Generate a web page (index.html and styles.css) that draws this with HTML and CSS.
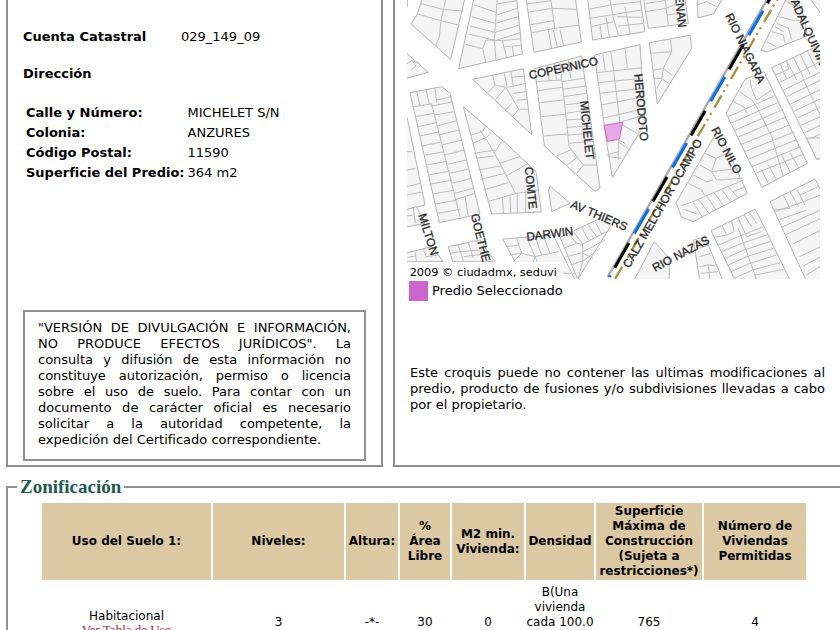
FILE: index.html
```html
<!DOCTYPE html>
<html lang="es">
<head>
<meta charset="utf-8">
<title>Zonificación</title>
<link rel="stylesheet" href="styles.css">
</head>
<body>
<div class="panels">
  <section class="panel info">
    <div class="account"><b>Cuenta Catastral</b><span>029_149_09</span></div>
    <h2 class="heading">Dirección</h2>
    <table class="address">
      <tr><th scope="row">Calle y Número:</th><td>MICHELET S/N</td></tr>
      <tr><th scope="row">Colonia:</th><td>ANZURES</td></tr>
      <tr><th scope="row">Código Postal:</th><td>11590</td></tr>
      <tr><th scope="row">Superficie del Predio:</th><td>364 m2</td></tr>
    </table>
    <p class="notice">"VERSIÓN DE DIVULGACIÓN E INFORMACIÓN, NO PRODUCE EFECTOS JURÍDICOS". La consulta&nbsp;y difusión de esta información no constituye autorización, permiso o licencia sobre el uso de suelo. Para contar con un documento de carácter oficial es necesario solicitar a la autoridad competente, la expedición&nbsp;del Certificado correspondiente.</p>
  </section>
  <section class="panel sketch">
    <svg class="map" viewBox="0 0 1239 837" role="img" aria-label="Croquis">
      <!-- north-west blocks -->
      <g transform="translate(-21 0)">
        <path class="block" d="M15 -6H22V20L15 28ZM67 -6L52 42L33 72L152 178L195 -6ZM222 -6L176 206L367 162L350 -6ZM378 -6L402 157L544 126L526 -6ZM563 -6L578 120L735 95L720 -6ZM15 155L85 217L15 236ZM30 278L125 260L150 280L240 642L118 668ZM218 238L370 206L395 404ZM190 320L320 432L408 515L424 636L275 642ZM404 206L545 168L600 565L585 574L433 438ZM583 165L720 134L735 370L705 420L637 532L622 440ZM15 350L22 355L75 615L15 630Z"/>
        <path class="lot" d="M60 10L127 28L188 33M52 42L123 62L178 76M138 -6L123 62L118 110L107 138M292 -6L283 120M222 14L290 38M215 50L285 70M210 78L284 97M205 102L283 121M197 133L248 146L258 120L310 122L362 116M248 146L257 187M283 121L288 180M307 122L320 172M314 140L365 136M337 140L341 168M290 12L350 2M289 45L352 25M286 70L355 50M285 97L360 75M284 122L362 98M452 -6L465 92M380 12L453 2M383 37L455 25L532 28M388 75L460 62M395 98L465 85L538 75M445 92L455 145M460 90L472 140M480 90L490 135M566 28L630 15L720 5M570 55L725 30M573 80L640 65M650 50L728 52M655 78L732 70M630 0L640 55L655 105M600 75L605 115M618 52L628 110M675 20L690 100M20 192L35 182L58 190M35 182L48 198L32 210"/>
        <path class="lot" d="M95 312L125 430L180 650M39 320L94 312M46 350L102 340M53 380L110 368M59 408L117 396M66 438L125 426M72 466L133 455M79 495L141 484M86 525L149 513M92 552L156 541M99 582L164 570M105 612L172 600M112 640L180 628M94 318L157 306M102 345L164 335M110 378L171 362M117 405L178 390M125 435L186 420M133 465L193 450M141 493L200 480M149 520L207 507M156 550L214 535M164 580L221 565M164 600L225 580M195 590L205 650M50 274L60 318M78 270L88 312M105 265L110 308M110 300L155 290"/>
        <path class="lot" d="M278 226L285 255L318 262L356 328L385 328M285 255L265 278M318 262L287 298M312 218L322 262M333 214L340 260M356 328L338 350M335 310L318 330M333 232L373 228M325 262L378 250M340 280L380 275M350 300L383 298M213 405L247 395L258 378M240 390L260 420L300 490L347 582M217 430L260 412L275 395M283 458L305 425M300 490L358 470M318 528L385 490M222 460L285 450M228 475L280 468M235 510L302 498M242 538L315 520M250 570L325 548M262 605L350 580L415 570M308 592L310 640M330 588L332 640M352 580V640M377 575V638"/>
        <path class="lot" d="M480 190L500 370L507 440L550 495L592 495M408 245L482 240M412 272L487 262M418 308L490 300M425 350L495 343M430 408L502 402M442 195L448 242M462 190L470 240M505 180L512 235M486 245L556 234M486 268L558 258M489 290L561 280M492 315L564 306M495 340L568 330M498 360L571 355M500 382L574 378M503 405L577 400M507 430L580 424M515 448L470 468M535 470L500 495M550 495L530 520M632 155L640 205L660 370M588 218L722 204M594 248L726 235M600 280L728 265M604 315L732 290M608 355L735 325M665 365L735 345M660 370L710 400M655 425L690 450M625 470L665 475M608 160L616 214M675 145L682 204M20 455H35M20 510L47 505M20 560L60 550M20 585L66 576"/>
        <path class="selected" d="M612 376L668 367L658 418L622 424Z"/>
      </g>
      <!-- north-east blocks -->
      <g transform="translate(609 0)">
        <path class="block" d="M100 -6L115 85L235 70L225 -6ZM262 -6L264 53L310 42L335 0V-6ZM118 128L240 106L245 145L142 312ZM530 -6L453 150L470 156L592 108L585 60L560 -6ZM600 -6L632 40V-6ZM485 203L640 130V475L620 478ZM405 238L462 215L592 490L456 562L348 340Z"/>
        <path class="lot" d="M105 35L170 25L200 10M165 -6L175 75M108 10L165 2M170 45L228 40M262 15L290 5L320 20M182 118L185 155L160 205L132 210M120 160L185 155M160 205L185 225M130 235L155 235L175 250M160 205L155 240L140 265M505 50L545 60L585 62M500 70L535 85L545 118M485 95L520 105L525 130M495 80L520 95M468 125L500 140M530 5L572 25"/>
        <path class="lot" d="M510 192L520 215L536 207L530 185M497 225L520 215L530 235M508 248L640 180M530 182L560 240M550 172L580 232M570 162L600 222M592 152L620 210M612 142L635 190M520 270L640 212M530 290L640 236M542 312L640 264M552 334L640 292M562 354L640 318M573 376L640 346M584 398L640 372M594 420L640 398M604 442L640 426M580 238L640 365"/>
        <path class="lot" d="M425 265L440 300L485 270M425 265L420 240M388 275L425 300L440 320M370 305L400 320L412 340M355 350L498 285M362 370L510 305M372 392L520 328M382 412L530 350M392 434L540 374M402 456L552 396M414 478L562 418M426 500L572 440M436 520L582 462M440 320L485 410L520 530M455 510L475 550M475 495L500 540M515 465L540 515M540 460L565 500"/>
      </g>
      <!-- south-west blocks -->
      <g transform="translate(-21 420)">
        <path class="block" d="M15 210L50 200L75 250L15 262ZM15 340L95 320L130 365H15ZM145 320L240 300L285 365H158ZM308 297L460 285L525 420H375ZM480 292L600 235L632 258L533 418ZM450 138L510 190L455 215L446 150Z"/>
        <path class="lot" d="M40 203L46 250M20 228L40 225M45 335L50 365M70 326L78 350L118 345M20 352L48 348M175 315L190 362M205 308L220 355M150 340L180 335L245 330M190 350L270 340M350 295L365 340L405 350L475 335M318 320L357 315M328 345L365 340M380 292L405 350L412 365M340 365L365 340M405 290L425 345M430 288L450 340M405 350L400 366M490 325L530 310L548 312L620 275M500 350L545 338L615 300M512 375L550 362L600 325M530 310L505 280M520 275L548 312V365L535 415M545 262L565 300M565 255L590 290M585 245L605 282M548 340L580 355M490 400H525"/>
      </g>
      <!-- south-east blocks -->
      <g transform="translate(609 420)">
        <path class="block" d="M310 -6L198 188L215 232L250 245L412 160L340 0ZM303 272L435 208L445 225L540 420H375ZM480 185L615 117L632 150V425H590ZM590 -6L620 58L632 54V-6ZM133 305L178 355V425H70ZM250 300L285 290L340 425H270Z"/>
        <path class="lot" d="M285 40L318 55L350 40M270 75L305 95L385 85M250 105L290 125L310 120M235 130L275 150L285 168M318 55L305 95L320 120L395 115M212 198L248 185L400 120M248 185L278 232M265 178L298 222M290 168L318 210M312 158L342 198M335 148L362 185M355 140L385 174M370 155L405 140M220 208L262 222M335 255L350 285L372 275L365 243M312 292L350 285M385 235L410 290L455 275M402 225L425 260M418 218L440 250M325 315L385 290L460 260M385 265L440 420M335 335L395 310L470 285M345 355L402 330L480 305M355 375L410 350L490 325M363 395L420 370L500 345M372 415L428 390L510 368M435 405L520 388M265 325L295 315M268 350L305 340M270 380L295 375L320 378M272 400L325 395M295 375L300 420M520 165L540 205L492 210M540 155L565 200M560 148L585 195M495 215L580 185L632 165M505 240L590 210M515 262L632 210M525 285L632 235M548 312L632 270M568 350L632 320M580 378L632 350M590 405L632 378M570 165L625 140M20 -2L45 10M-10 45L25 35M25 5L25 60"/>
      </g>
      <!-- borough boundary and metro line along Melchor Ocampo -->
      <path class="track" d="M1083 -6L602 831"/>
      <path class="track-blue" d="M1090 -6L607 831"/>
      <path class="track-black" d="M1090 -6L607 831"/>
      <path class="boundary" d="M1113 -6L624 837"/>
      <g class="street">
        <text transform="translate(368 238) rotate(-12)">COPERNICO</text>
        <text transform="translate(519 304) rotate(84)">MICHELET</text>
        <text transform="translate(682 223) rotate(85)">HERODOTO</text>
        <text transform="translate(814 84) rotate(84)" text-anchor="end">RENAN</text>
        <text transform="translate(954 47) rotate(64)">RIO NIAGARA</text>
        <text transform="translate(1151 4) rotate(66)">ADALQUIVIR</text>
        <text transform="translate(353 502) rotate(84)">COMTE</text>
        <text transform="translate(34 645) rotate(73)">MILTON</text>
        <text transform="translate(191 644) rotate(76)">GOETHE</text>
        <text transform="translate(488 622) rotate(23)">AV THIERS</text>
        <text transform="translate(360 722) rotate(-7)">DARWIN</text>
        <text transform="translate(667 806) rotate(-60)">CALZ MELCHOR OCAMPO</text>
        <text transform="translate(912 389) rotate(62)">RIO NILO</text>
        <text transform="translate(744 816) rotate(-28)">RIO NAZAS</text>
      </g>
      <path class="caption-bg" d="M0 786H458V837H0Z"/>
      <text class="caption" x="8" y="828">2009 © ciudadmx, seduvi</text>
    </svg>
    <div class="legend"><span class="swatch"></span>Predio Seleccionado</div>
    <p class="remark">Este croquis puede no contener las ultimas modificaciones al predio, producto de fusiones y/o subdivisiones llevadas a cabo por el propietario.</p>
  </section>
</div>
<fieldset class="zoning">
  <legend>Zonificación</legend>
  <div class="uses-wrap">
  <table class="uses">
    <colgroup>
      <col><col class="c-levels"><col class="c-height"><col class="c-free"><col class="c-min"><col class="c-density"><col class="c-area"><col class="c-homes">
    </colgroup>
    <thead>
      <tr><th>Uso del Suelo 1:</th><th>Niveles:</th><th>Altura:</th><th>%<br>Área Libre</th><th>M2 min. Vivienda:</th><th>Densidad</th><th>Superficie Máxima de Construcción (Sujeta a restricciones*)</th><th>Número de Viviendas Permitidas</th></tr>
    </thead>
    <tbody>
      <tr><td>Habitacional<a href="#usos">Ver Tabla de Uso</a></td><td>3</td><td>-*-</td><td>30</td><td>0</td><td>B(Una vivienda cada&nbsp;100.0 m2 de terreno)</td><td>765</td><td>4</td></tr>
    </tbody>
  </table>
  </div>
</fieldset>
</body>
</html>
```
FILE: styles.css
```css
body {
  margin: 0;
  padding-left: 6px;
  overflow: hidden;
  background: #fff;
  color: #000;
  font: 13px/16px Verdana, "DejaVu Sans", sans-serif;
}

.panels {
  display: grid;
  grid-template-columns: 377fr 447fr;
  gap: 10px;
}

.panel {
  box-sizing: border-box;
  border: 2px solid #909090;
  border-top: 0;
}

.info {
  display: flex;
  flex-direction: column;
  padding: 29px 15px 4px;
}

.account {
  display: flex;
}

.account b {
  width: 158px;
}

.heading {
  margin: 21px 0 20px;
  font-size: 13px;
}

.address {
  align-self: flex-start;
  border-spacing: 1px 2px;
}

.address th,
.address td {
  padding: 1px 0 1px 2px;
  text-align: left;
  white-space: nowrap;
}

.notice {
  margin: auto 0 0;
  border: 2px solid #909090;
  padding: 8px 13px 11px;
  text-align: justify;
}

.sketch {
  border-right: 0;
  padding: 0 15px 52px 12px;
}

.map {
  display: block;
  width: 100%;
  max-width: 413px;
}

.block {
  fill: #f5f5f5;
  stroke: #b4b4b4;
  stroke-width: 3;
}

.lot {
  fill: none;
  stroke: #bebebe;
  stroke-width: 3;
}

.selected {
  fill: #e6a8e6;
  stroke: #cc66cc;
  stroke-width: 3;
}

.track,
.track-blue,
.track-black,
.boundary {
  fill: none;
  stroke: #aaa;
  stroke-width: 7;
}

.track-blue,
.track-black {
  stroke: #000;
  stroke-width: 9;
  stroke-dasharray: 85 144;
  stroke-dashoffset: 67;
}

.track-blue {
  stroke: #0a6fe8;
  stroke-dashoffset: -44;
}

.boundary {
  stroke: #a8903c;
  stroke-dasharray: 42 19 6 14 6 12;
  stroke-dashoffset: 58;
}

.street {
  fill: #2b2b2b;
  stroke: #2b2b2b;
  stroke-width: 1;
  font: 35px "Liberation Sans", sans-serif;
}

.caption-bg {
  fill: #fff;
}

.caption {
  font: 34px "DejaVu Sans", sans-serif;
}

.legend {
  display: flex;
  align-items: center;
  gap: 4px;
  margin: 2px 0 64px 2px;
}

.swatch {
  width: 19px;
  height: 20px;
  background: #cc66cc;
}

.remark {
  margin: 0 0 0 3px;
  text-align: justify;
}

.zoning {
  margin: 10px 0 0;
  border: 2px solid #909090;
  border-right: 0;
  padding: 4px 0;
}

.zoning legend {
  margin-left: 9px;
  padding: 0 3px;
  color: #1f5c4d;
  font: bold 19px/20px "Liberation Serif", serif;
}

.uses-wrap {
  padding: 0 32px;
}

.uses {
  width: 100%;
  table-layout: fixed;
  border-spacing: 2px;
  font-size: 12px;
  line-height: 15px;
  text-align: center;
}

.uses th {
  padding: 1px;
  background: #dcc8a2;
}

.uses td {
  padding: 3px 0;
}

.uses a {
  display: block;
  color: #a0204c;
  font: 13px/12px "Liberation Serif", serif;
  text-decoration: none;
}

.c-levels {
  width: 131px;
}

.c-height {
  width: 52px;
}

.c-free {
  width: 50px;
}

.c-min {
  width: 72px;
}

.c-density {
  width: 68px;
}

.c-area {
  width: 106px;
}

.c-homes {
  width: 102px;
}
```
